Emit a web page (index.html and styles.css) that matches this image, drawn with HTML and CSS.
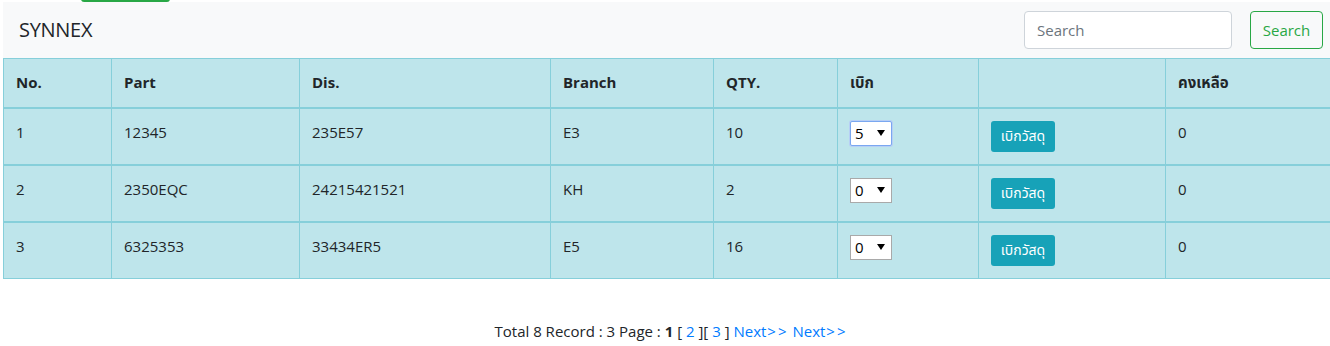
FILE: index.html
```html
<!DOCTYPE html>
<html lang="th">
<head>
    <meta charset="UTF-8">
    <meta name="viewport" content="width=device-width, initial-scale=1.0">
    <title>SYNNEX - เบิกวัสดุ</title>
    <link rel="stylesheet" href="styles.css">
</head>
<body>

<div class="page">
    <div class="top-strip"><span class="top-btn"></span></div>

    <nav class="navbar">
        <a class="brand" href="#">SYNNEX</a>
        <form class="search-form">
            <input type="search" class="search-input" placeholder="Search">
            <button type="submit" class="btn-search">Search</button>
        </form>
    </nav>

    <table class="stock-table">
        <thead>
            <tr>
                <th class="c-no">No.</th>
                <th class="c-part">Part</th>
                <th class="c-dis">Dis.</th>
                <th class="c-branch">Branch</th>
                <th class="c-qty">QTY.</th>
                <th class="c-take">เบิก</th>
                <th class="c-act"></th>
                <th>คงเหลือ</th>
            </tr>
        </thead>
        <tbody>
            <tr>
                <td>1</td>
                <td>12345</td>
                <td>235E57</td>
                <td>E3</td>
                <td>10</td>
                <td><select class="qty-select focused"><option>5</option></select></td>
                <td><button class="btn-take">เบิกวัสดุ</button></td>
                <td>0</td>
            </tr>
        </tbody>
        <tbody>
            <tr>
                <td>2</td>
                <td>2350EQC</td>
                <td>24215421521</td>
                <td>KH</td>
                <td>2</td>
                <td><select class="qty-select"><option>0</option></select></td>
                <td><button class="btn-take">เบิกวัสดุ</button></td>
                <td>0</td>
            </tr>
        </tbody>
        <tbody>
            <tr>
                <td>3</td>
                <td>6325353</td>
                <td>33434ER5</td>
                <td>E5</td>
                <td>16</td>
                <td><select class="qty-select"><option>0</option></select></td>
                <td><button class="btn-take">เบิกวัสดุ</button></td>
                <td>0</td>
            </tr>
        </tbody>
    </table>

    <div class="pager">
        Total 8 Record : 3 Page : <b>1</b> [ <a href="#">2</a> ][ <a href="#">3</a> ] <a href="#">Next<span class="arr">&gt;&gt;</span></a> <a href="#">Next<span class="arr">&gt;&gt;</span></a>
    </div>
</div>

</body>
</html>
```

FILE: styles.css
```css
* {
    box-sizing: border-box;
    margin: 0;
    padding: 0;
}

body {
    font-family: 'Open Sans', 'Noto Sans', 'Noto Sans Thai', sans-serif;
    font-size: 16px;
    line-height: 1.5;
    color: #212529;
    background-color: #fff;
    overflow: hidden;
}

.page {
    width: 1336px;
    margin-left: 3px;
}

.top-strip {
    height: 2px;
    overflow: hidden;
}

.top-btn {
    display: block;
    width: 89px;
    height: 6px;
    margin-left: 78px;
    margin-top: -4px;
    background-color: #28a745;
    border-radius: 4px;
}

.navbar {
    display: flex;
    justify-content: space-between;
    align-items: center;
    height: 56px;
    padding: 8px 16px;
    background-color: #f8f9fa;
}

.brand {
    font-size: 20px;
    color: #212529;
    text-decoration: none;
    letter-spacing: -0.3px;
}

.search-form {
    display: flex;
    align-items: center;
    gap: 18px;
}

.search-input {
    width: 208px;
    height: 38px;
    padding: 6px 12px;
    font-family: inherit;
    font-size: 15px;
    color: #495057;
    background-color: #fff;
    border: 1px solid #ced4da;
    border-radius: 4px;
}

.search-input::placeholder {
    color: #6c757d;
}

.btn-search {
    width: 73px;
    height: 38px;
    font-family: inherit;
    font-size: 15px;
    color: #28a745;
    background: transparent;
    border: 1px solid #28a745;
    border-radius: 4px;
    cursor: pointer;
}

.stock-table {
    width: 100%;
    border-collapse: collapse;
    background-color: #bee5eb;
    font-size: 15px;
}

.stock-table th,
.stock-table td {
    border: 1px solid #86cfda;
    padding: 12px;
    text-align: left;
    vertical-align: top;
}

.stock-table td {
    border-top-width: 2px;
}

.stock-table th {
    height: 49px;
    padding: 12px 12px 11px;
    border-bottom-width: 2px;
    font-weight: bold;
}

.c-no { width: 108px; }
.c-part { width: 188px; }
.c-dis { width: 251px; }
.c-branch { width: 163px; }
.c-qty { width: 124px; }
.c-take { width: 141px; }
.c-act { width: 187px; }

.qty-select {
    -webkit-appearance: none;
    appearance: none;
    width: 42px;
    height: 25px;
    padding: 0 0 0 4px;
    font-family: inherit;
    font-size: 15px;
    color: #000;
    background: #fff url("data:image/svg+xml,%3Csvg xmlns='http://www.w3.org/2000/svg' width='8' height='6'%3E%3Cpath d='M0 0h8L4 6z' fill='%23000'/%3E%3C/svg%3E") no-repeat right 6px center;
    border: 1px solid #a9a9a9;
    border-radius: 0;
    vertical-align: top;
}

.qty-select.focused {
    border-color: #7aa7f0;
    border-radius: 2px;
    box-shadow: 0 0 0 1px #b7cff5;
}

.btn-take {
    width: 64px;
    height: 31px;
    padding: 4px 8px;
    font-family: inherit;
    font-size: 14px;
    color: #fff;
    background-color: #17a2b8;
    border: none;
    border-radius: 3px;
    cursor: pointer;
    vertical-align: top;
}

.pager {
    margin-top: 41px;
    text-align: center;
    font-size: 15px;
}

.pager a {
    color: #007bff;
    text-decoration: none;
}

.pager .arr {
    letter-spacing: 2px;
    margin-left: 1px;
}
```
